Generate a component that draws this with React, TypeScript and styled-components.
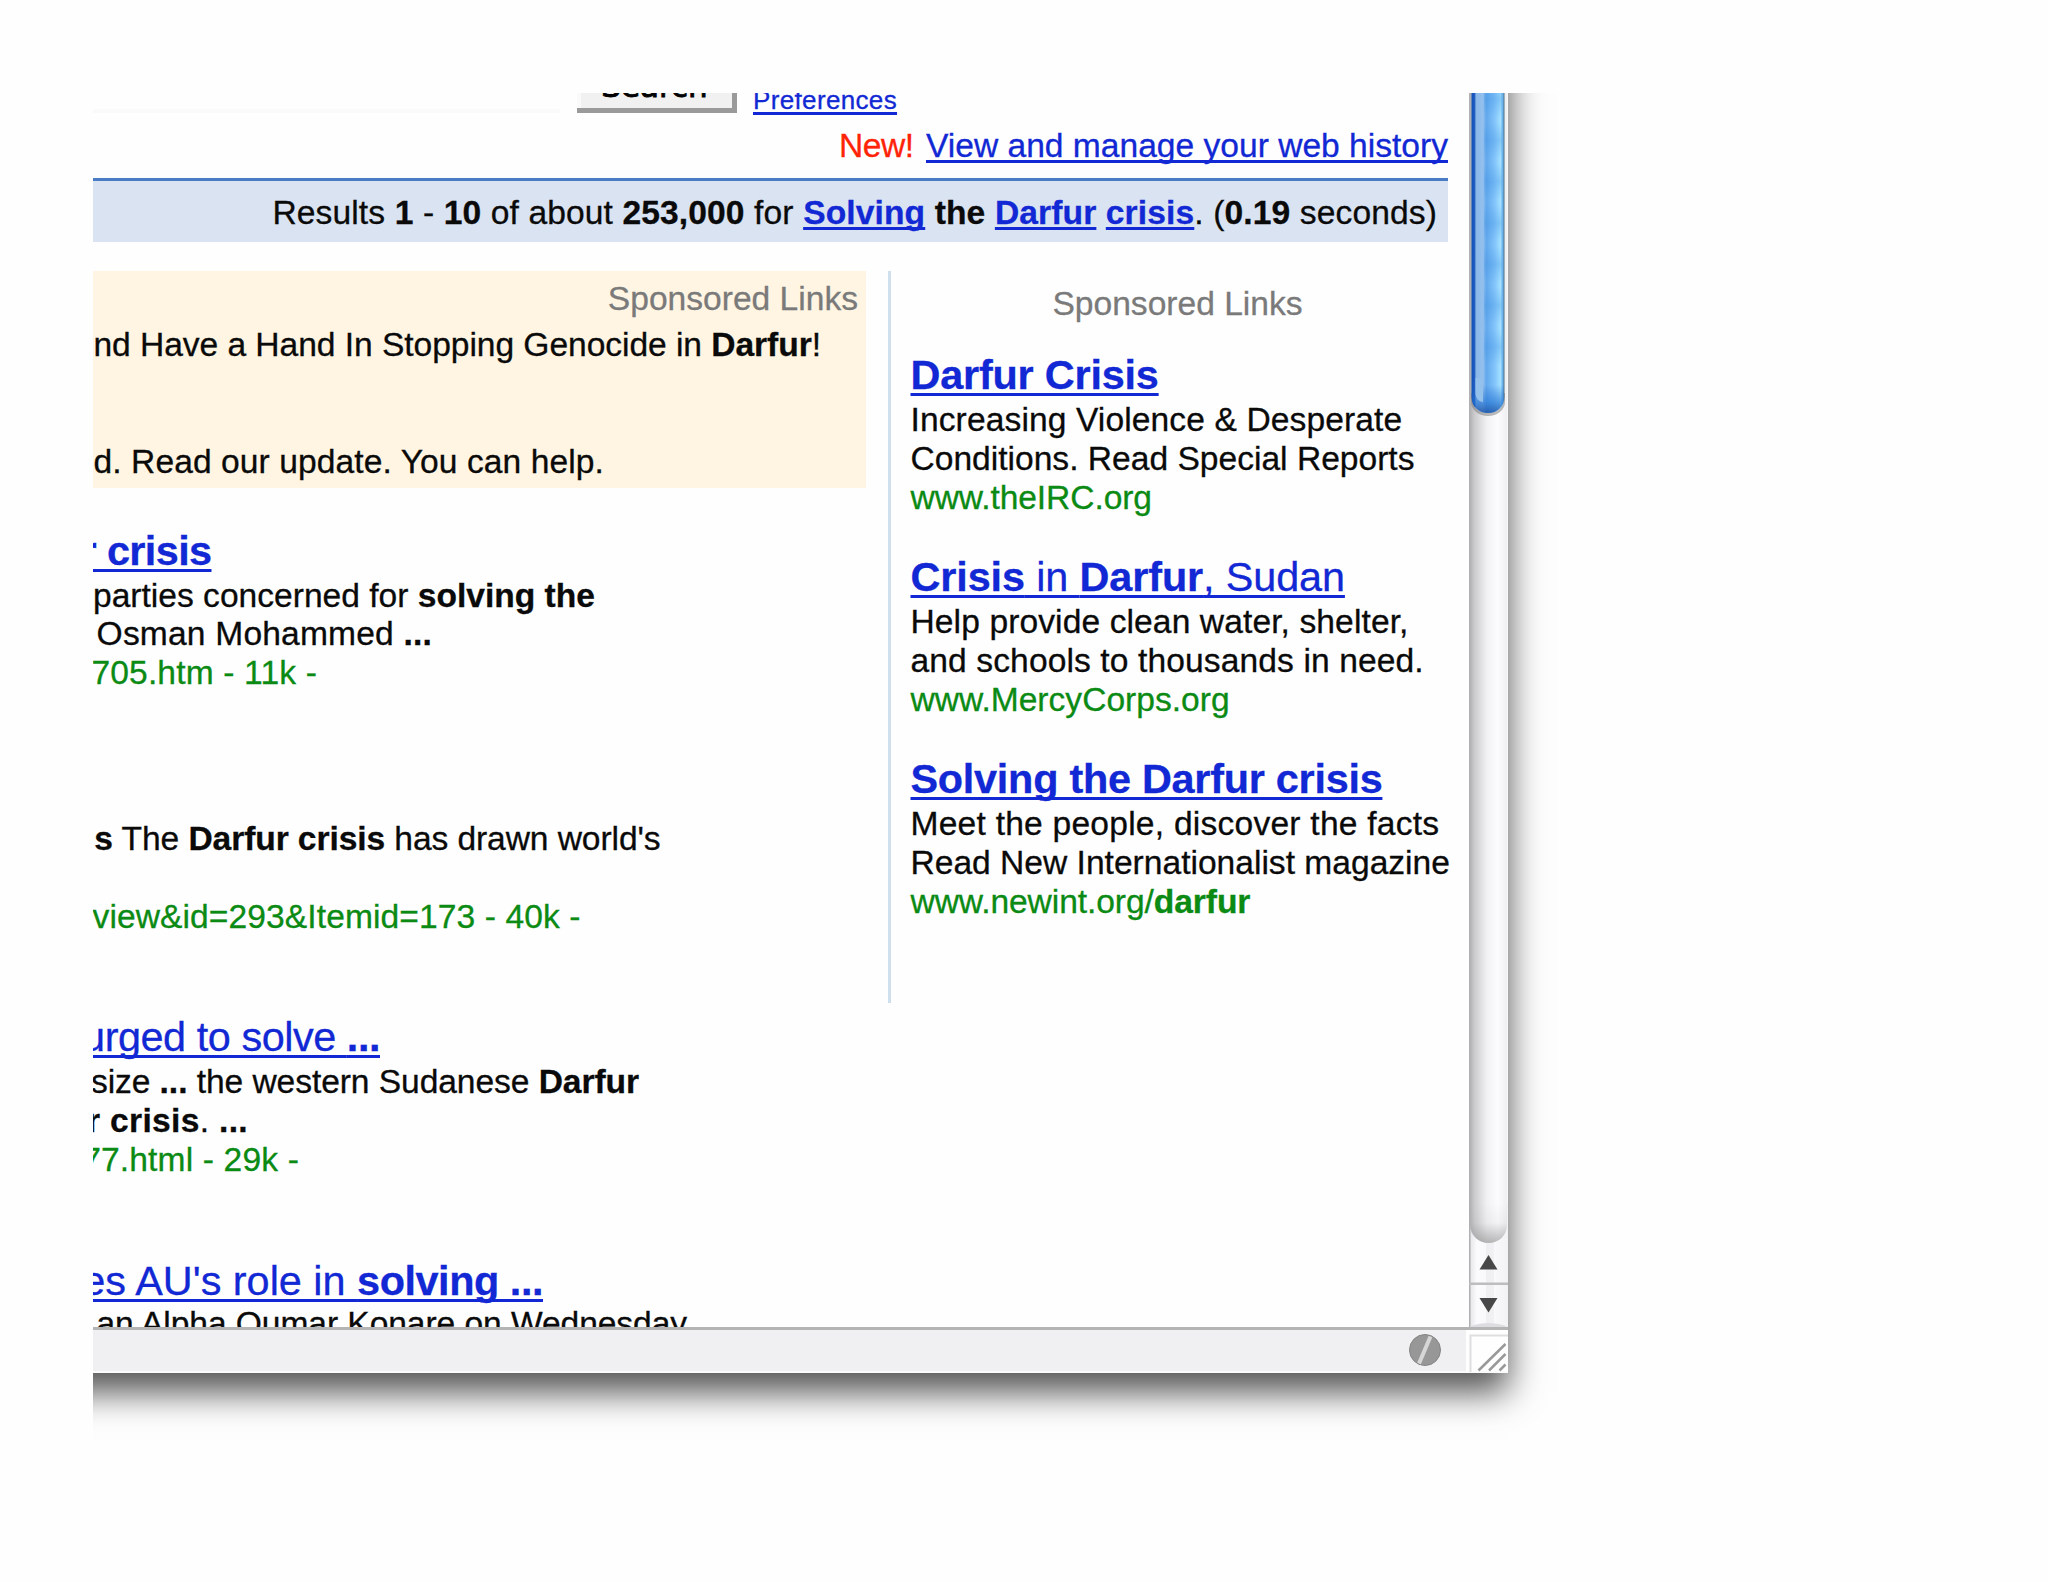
import React from "react";
import styled, { createGlobalStyle, css } from "styled-components";

const GlobalStyle = createGlobalStyle`
  html, body { margin: 0; padding: 0; background: #fefefe; }
  body { font-family: "Liberation Sans", Arial, Helvetica, sans-serif; }
  * { box-sizing: border-box; }
`;

const Page = styled.div`
  width: 2048px;
  height: 1582px;
  padding: 93px 0 0 93px;
  overflow: hidden;
  background: #fefefe;
`;

const Clip = styled.div`
  width: 1480px;
  height: 1370px;
  overflow: hidden;
`;

const Window = styled.div`
  width: 1515px;
  height: 1380px;
  margin: -100px 0 0 -100px;
  padding: 100px 0 0 100px;
  background: #fefefe;
  box-shadow: 0 19px 33px rgba(0, 0, 0, 0.68);
`;

const Body = styled.div`
  display: flex;
  height: 1234px;
  overflow: hidden;
`;

const Content = styled.main`
  width: 1376px;
  padding-right: 21px;
  overflow: hidden;
  color: #0a0a0a;
  -webkit-text-stroke: 0.3px currentColor;
`;

const SearchRow = styled.div`
  display: flex;
  align-items: flex-end;
  height: 20px;
`;

const SearchField = styled.div`
  width: 467px;
  height: 40px;
  margin-right: 17px;
  border-bottom: 4px solid #fafafa;
`;

const SearchButton = styled.button`
  width: 160px;
  height: 70px;
  padding: 0 0 4px;
  display: flex;
  align-items: flex-end;
  justify-content: center;
  border: 0 solid #9a9a9a;
  border-width: 0 5px 5px 0;
  background: #f1f1f1;
  box-shadow: inset 4px 0 0 #fafafa;
  color: #000;
  font: 31px/36px "DejaVu Sans", sans-serif;
  -webkit-text-stroke: 0.9px #000;
`;

const Link = styled.a`
  color: #1128d4;
  text-decoration: underline;
  text-decoration-thickness: 2.7px;
  text-underline-offset: 3px;
  text-decoration-skip-ink: none;
`;

const Preferences = styled(Link)`
  margin: 0 0 -2px 16px;
  font-size: 26px;
  line-height: 30px;
  letter-spacing: 0.35px;
`;

const tones = {
  text: "#0a0a0a",
  url: "#0b8a14",
  muted: "#7a7a7a",
};

const textBase = css<{ $end?: number; $track?: number }>`
  white-space: pre;
  letter-spacing: ${(p) => p.$track ?? 0}px;
  ${(p) =>
    p.$end &&
    css`
      display: flex;
      justify-content: flex-end;
      width: ${p.$end}px;
    `}
`;

/* $end is the right edge of the text; anything longer runs out under the left edge. */
const Line = styled.div<{ $tone?: keyof typeof tones; $end?: number; $track?: number }>`
  ${textBase}
  height: 38.8px;
  padding-top: 1.4px;
  font-size: 33.6px;
  line-height: 38.8px;
  color: ${(p) => tones[p.$tone ?? "text"]};
`;

const LastLine = styled(Line)`
  padding-top: 0;
`;

const Title = styled.div<{ $end?: number; $track?: number }>`
  ${textBase}
  height: 49.6px;
  padding-top: 1px;
  font-size: 41.4px;
  line-height: 49.6px;
`;

const TitleLink = styled(Link)`
  text-underline-offset: 4px;
`;

const TightBold = styled.b`
  letter-spacing: -0.45px;
`;

const HistoryRow = styled(Line)`
  display: flex;
  justify-content: flex-end;
  gap: 12.5px;
  margin-top: 13px;
`;

const New = styled.span`
  color: #ff2408;
  letter-spacing: -0.5px;
`;

const Stats = styled.div`
  height: 64px;
  margin-top: 13.5px;
  padding: 11px 11px 0 0;
  border-top: 3.5px solid #4a7cc6;
  background: #d9e3f1;
  display: flex;
  justify-content: flex-end;
`;

const Columns = styled.div`
  display: flex;
  align-items: flex-start;
  margin-top: 28.5px;
`;

const Main = styled.section`
  width: 773px;
`;

const TopAds = styled.div`
  height: 217px;
  padding-top: 7.5px;
  background: #fff5e2;
`;

const TopAdsLabel = styled(Line)`
  padding-right: 8px;
  text-align: right;
  margin-bottom: 8px;
`;

const Results = styled.div`
  display: flex;
  flex-direction: column;
  gap: 77.4px;
  margin-top: 37.9px;
`;

const Result = styled.article`
  flex: none;
  height: 166px;
`;

const Side = styled.aside`
  width: 560px;
  height: 732px;
  margin-left: 21.5px;
  padding: 12.7px 0 0 20px;
  border-left: 3px solid #cfdfec;
`;

const SideLabel = styled(Line)`
  text-align: center;
  padding-right: 3px;
  margin-bottom: 28.2px;
`;

const SideAds = styled.div`
  display: flex;
  flex-direction: column;
  gap: 35.8px;
`;

const Scrollbar = styled.div`
  flex: none;
  width: 39px;
  background: #f8f7fa;
`;

const StatusBar = styled.footer`
  display: flex;
  height: 46px;
  border-top: 3px solid #b4b4b4;
  border-bottom: 2px solid #fbfbfb;
  background: #f0eff1;
`;

const StatusIcon = styled.div`
  width: 32px;
  height: 32px;
  margin: 4px 25px 0 1316px;
  svg { display: block; }
`;

const Grip = styled.div`
  width: 42px;
  background: #fefefe;
  svg { display: block; }
`;

function ScrollTrack() {
  const bands = Array.from({ length: 7 }, (_, i) => 6 + i * 41.3);
  return (
    <Scrollbar>
      <svg width="39" height="1234" viewBox="0 0 39 1234">
        <defs>
          <linearGradient id="track">
            <stop offset="0" stopColor="#b2b2b4" />
            <stop offset="0.12" stopColor="#cbcacd" />
            <stop offset="0.45" stopColor="#f1f0f3" />
            <stop offset="0.75" stopColor="#fcfbfe" />
            <stop offset="1" stopColor="#efeef1" />
          </linearGradient>
          <linearGradient id="capShade" x1="0" y1="0" x2="0" y2="1">
            <stop offset="0" stopColor="#888" stopOpacity="0" />
            <stop offset="0.5" stopColor="#888" stopOpacity="0.08" />
            <stop offset="1" stopColor="#888" stopOpacity="0.6" />
          </linearGradient>
          <linearGradient id="thumb">
            <stop offset="0" stopColor="#1450b4" />
            <stop offset="0.09" stopColor="#1f5cc2" />
            <stop offset="0.14" stopColor="#8cb8e8" />
            <stop offset="0.35" stopColor="#94c0ee" />
            <stop offset="0.45" stopColor="#62a8ec" />
            <stop offset="0.7" stopColor="#82c4fb" />
            <stop offset="0.88" stopColor="#a4e0ff" />
            <stop offset="0.94" stopColor="#6cb4ec" />
            <stop offset="1" stopColor="#4a6f88" />
          </linearGradient>
          <linearGradient id="thumbEnd" x1="0" y1="0" x2="0" y2="1">
            <stop offset="0" stopColor="#1c66c8" stopOpacity="0" />
            <stop offset="0.6" stopColor="#2272d2" stopOpacity="0.6" />
            <stop offset="1" stopColor="#164a9c" stopOpacity="0.8" />
          </linearGradient>
          <linearGradient id="band" x1="0" y1="0" x2="0" y2="1">
            <stop offset="0" stopColor="#3b8ee0" stopOpacity="0" />
            <stop offset="0.5" stopColor="#3b8ee0" stopOpacity="0.3" />
            <stop offset="1" stopColor="#3b8ee0" stopOpacity="0" />
          </linearGradient>
          <linearGradient id="btn">
            <stop offset="0" stopColor="#e2e1e5" />
            <stop offset="0.2" stopColor="#fbfafd" />
            <stop offset="0.44" stopColor="#f9f8fb" />
            <stop offset="0.45" stopColor="#efeef1" />
            <stop offset="0.63" stopColor="#f1f0f3" />
            <stop offset="0.64" stopColor="#f9f8fb" />
            <stop offset="1" stopColor="#f2f1f4" />
          </linearGradient>
        </defs>
        <rect x="0" y="1110" width="39" height="124" fill="url(#btn)" />
        <path d="M1 -5H38V1132C38 1143 29 1150 19.500 1150S1 1143 1 1132Z" fill="url(#track)" />
        <path d="M2 1110H38V1132C38 1143 29 1150 19.500 1150S2 1143 2 1132Z" fill="url(#capShade)" />
        <path d="M2 300H36V309C36 317 28 323 19 323S2 317 2 309Z" fill="#777" opacity="0.5" />
        <path d="M2.500 -5H35.500V304C35.500 314 28 320 19 320S2.500 314 2.500 304Z" fill="url(#thumb)" />
        {bands.map((y) => (
          <rect key={y} x="15" y={y - 18} width="18" height="36" fill="url(#band)" />
        ))}
        <path d="M3 292H35V304C35 314 28 320 19 320S3 314 3 304Z" fill="url(#thumbEnd)" />
        <path d="M6.500 285H14V309C10 309 6.500 305 6.500 300Z" fill="#94c0ec" />
        <rect x="0" y="0" width="1.500" height="1234" fill="#b0b0b2" />
        <path d="M19.500 1162L28.500 1176.500H10.500Z" fill="#484848" />
        <rect x="0" y="1189.500" width="39" height="2.500" fill="#bdbcbf" />
        <path d="M10.500 1205H28.500L19.500 1219.500Z" fill="#484848" />
        <path d="M1 1234C8 1229 31 1229 38 1234Z" fill="#dddce0" />
      </svg>
    </Scrollbar>
  );
}

export default function App() {
  return (
    <>
      <GlobalStyle />
      <Page>
        <Clip>
          <Window>
            <Body>
              <Content>
                <SearchRow>
                  <SearchField />
                  <SearchButton>Search</SearchButton>
                  <Preferences>Preferences</Preferences>
                </SearchRow>
                <HistoryRow>
                  <New>New!</New>
                  <Link>View and manage your web history</Link>
                </HistoryRow>
                <Stats>
                  <Line $track={0.12}>
                    Results <b>1</b> - <b>10</b> of about <b>253,000</b> for{" "}
                    <b>
                      <Link>Solving</Link> the <Link>Darfur</Link> <Link>crisis</Link>
                    </b>
                    . (<b>0.19</b> seconds)
                  </Line>
                </Stats>
                <Columns>
                  <Main>
                    <TopAds>
                      <TopAdsLabel $tone="muted">Sponsored Links</TopAdsLabel>
                      <Line $end={728} $track={-0.05}>
                        <span>nd Have a Hand In Stopping Genocide in <b>Darfur</b>!</span>
                      </Line>
                      <Line />
                      <Line />
                      <Line $end={511} $track={0.08}>d. Read our update. You can help.</Line>
                    </TopAds>
                    <Results>
                      <Result>
                        <Title $end={118.5} $track={-0.6}>
                          <TitleLink><b>r crisis</b></TitleLink>
                        </Title>
                        <Line $end={502}>
                          <span>parties concerned for <b>solving the</b></span>
                        </Line>
                        <Line $end={339} $track={0.18}>
                          <span>Osman Mohammed <b>...</b></span>
                        </Line>
                        <Line $end={224} $track={0.15} $tone="url">705.htm - 11k -</Line>
                      </Result>
                      <Result>
                        <Title />
                        <Line $end={567.5} $track={-0.09}>
                          <span><b>s</b> The <b>Darfur crisis</b> has drawn world's</span>
                        </Line>
                        <Line />
                        <Line $end={487.5} $track={0.09} $tone="url">view&amp;id=293&amp;Itemid=173 - 40k -</Line>
                      </Result>
                      <Result>
                        <Title $end={287} $track={-0.45}>
                          <TitleLink>urged to solve <b>...</b></TitleLink>
                        </Title>
                        <Line $end={546} $track={-0.07}>
                          <span>size <b>...</b> the western Sudanese <b>Darfur</b></span>
                        </Line>
                        <Line $end={155} $track={0.32}>
                          <span><b>r crisis</b>. <b>...</b></span>
                        </Line>
                        <Line $end={206} $track={0.15} $tone="url">77.html - 29k -</Line>
                      </Result>
                      <Result>
                        <Title $end={450}>
                          <TitleLink>es AU's role in <TightBold>solving ...</TightBold></TitleLink>
                        </Title>
                        <LastLine $end={594} $track={-0.07}>an Alpha Oumar Konare on Wednesday</LastLine>
                      </Result>
                    </Results>
                  </Main>
                  <Side>
                    <SideLabel $tone="muted">Sponsored Links</SideLabel>
                    <SideAds>
                      <Result as="div">
                        <Title $track={-0.2}><TitleLink><b>Darfur Crisis</b></TitleLink></Title>
                        <Line $track={0.11}>Increasing Violence &amp; Desperate</Line>
                        <Line>Conditions. Read Special Reports</Line>
                        <Line $track={-0.08} $tone="url">www.theIRC.org</Line>
                      </Result>
                      <Result as="div">
                        <Title $track={-0.12}><TitleLink><b>Crisis</b> in <b>Darfur</b>, Sudan</TitleLink></Title>
                        <Line $track={0.1}>Help provide clean water, shelter,</Line>
                        <Line $track={0.11}>and schools to thousands in need.</Line>
                        <Line $tone="url">www.MercyCorps.org</Line>
                      </Result>
                      <Result as="div">
                        <Title $track={-0.26}><TitleLink><b>Solving the Darfur crisis</b></TitleLink></Title>
                        <Line $track={0.23}>Meet the people, discover the facts</Line>
                        <Line>Read New Internationalist magazine</Line>
                        <Line $track={-0.08} $tone="url">www.newint.org/<b>darfur</b></Line>
                      </Result>
                    </SideAds>
                  </Side>
                </Columns>
              </Content>
              <ScrollTrack />
            </Body>
            <StatusBar>
              <StatusIcon>
                <svg width="32" height="32" viewBox="0 0 32 32">
                  <circle cx="16" cy="16" r="15.500" fill="#979797" stroke="#858585" />
                  <path d="M21.500 2.500L10 29.500" stroke="#d6d6d6" strokeWidth="4" />
                </svg>
              </StatusIcon>
              <Grip>
                <svg width="42" height="42" viewBox="0 0 42 42">
                  <path d="M4.500 42V5.500H42" fill="none" stroke="#dedee0" strokeWidth="2" />
                  <g stroke="#999" strokeWidth="2.500">
                    <path d="M12.500 40.500L39.500 14" />
                    <path d="M23 40.500L39.500 24" />
                    <path d="M33.500 40.500L39.500 34.500" />
                  </g>
                </svg>
              </Grip>
            </StatusBar>
          </Window>
        </Clip>
      </Page>
    </>
  );
}
